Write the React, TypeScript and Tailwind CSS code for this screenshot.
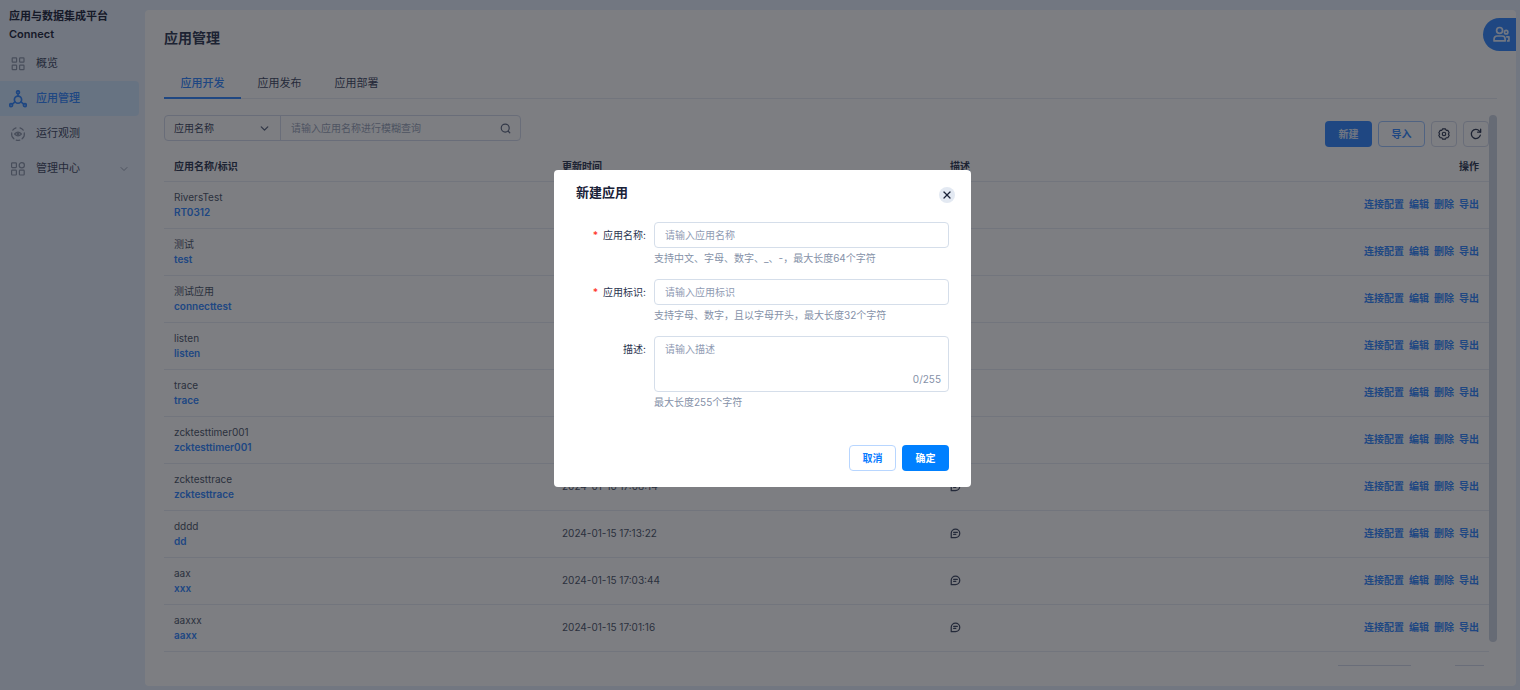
import { useState } from 'react'
import type { ReactNode } from 'react'
import { ChevronDown, X } from 'lucide-react'

interface AppRow {
  name: string
  code: string
  updatedAt?: string
}

const rows: AppRow[] = [
  { name: 'RiversTest', code: 'RT0312' },
  { name: '测试', code: 'test' },
  { name: '测试应用', code: 'connecttest' },
  { name: 'listen', code: 'listen' },
  { name: 'trace', code: 'trace' },
  { name: 'zcktesttimer001', code: 'zcktesttimer001' },
  { name: 'zcktesttrace', code: 'zcktesttrace', updatedAt: '2024-01-16 17:08:14' },
  { name: 'dddd', code: 'dd', updatedAt: '2024-01-15 17:13:22' },
  { name: 'aax', code: 'xxx', updatedAt: '2024-01-15 17:03:44' },
  { name: 'aaxxx', code: 'aaxx', updatedAt: '2024-01-15 17:01:16' },
]

const tabs = ['应用开发', '应用发布', '应用部署']
const rowActions = ['连接配置', '编辑', '删除', '导出']

function Svg({ size, children, strokeWidth = 1.2 }: { size: number; children: ReactNode; strokeWidth?: number }) {
  return (
    <svg
      width={size}
      height={size}
      viewBox="0 0 16 16"
      fill="none"
      stroke="currentColor"
      strokeWidth={strokeWidth}
      strokeLinecap="round"
      strokeLinejoin="round"
      className="shrink-0"
      aria-hidden="true"
    >
      {children}
    </svg>
  )
}

function OverviewIcon() {
  return (
    <Svg size={16}>
      <rect x="2.2" y="1.8" width="4.4" height="4.4" rx="0.6" />
      <rect x="9.6" y="1.8" width="4.4" height="4.4" rx="0.6" />
      <rect x="2.2" y="9.2" width="4.4" height="4.4" rx="0.6" />
      <rect x="9.6" y="9.2" width="4.4" height="4.4" rx="0.6" />
    </Svg>
  )
}

function AppsIcon() {
  return (
    <Svg size={18} strokeWidth={1.5}>
      <circle cx="8" cy="8.6" r="3.2" />
      <circle cx="8" cy="2" r="1.3" />
      <circle cx="1.9" cy="13.4" r="1.3" />
      <circle cx="14.1" cy="13.4" r="1.3" />
      <path d="M8 3.3v2.1M5.4 10.6l-2.5 2M10.6 10.6l2.5 2" />
    </Svg>
  )
}

function MonitorIcon() {
  return (
    <Svg size={16}>
      <path d="M6 1.9A6.4 6.4 0 0 0 2.8 4.2M1.7 6.8a6.4 6.4 0 0 0 2.2 6M10 1.9a6.4 6.4 0 0 1 3.2 2.3M14.3 6.8a6.4 6.4 0 0 1-2.2 6M6.2 14.2q1.8.4 3.6 0" />
      <path d="M4.6 8Q8 4.4 11.4 8 8 11.6 4.6 8z" />
      <circle cx="8" cy="8" r="0.8" />
    </Svg>
  )
}

function AdminIcon() {
  return (
    <Svg size={16}>
      <rect x="1.6" y="1.8" width="4.8" height="4.8" rx="0.8" />
      <circle cx="11.8" cy="4.2" r="2.6" />
      <rect x="1.6" y="9.2" width="4.8" height="4.8" rx="0.8" />
      <rect x="9.4" y="9.2" width="4.8" height="4.8" rx="0.8" />
    </Svg>
  )
}

function SearchIcon() {
  return (
    <Svg size={11} strokeWidth={1.7}>
      <circle cx="7.6" cy="7.4" r="5.8" />
      <path d="M12 12l2.2 2.2" />
    </Svg>
  )
}

function SettingIcon() {
  return (
    <Svg size={12} strokeWidth={1.5}>
      <path d="M6.2 1.2h3.6l1.1 1.9 2.2.1 1.8 3.1L13.8 8l1.1 1.8-1.8 3.1-2.2.1-1.1 1.9H6.2l-1.1-1.9-2.2-.1-1.8-3.1L2.2 8 1.1 6.3l1.8-3.1 2.2-.1z" />
      <circle cx="8" cy="8" r="2.3" />
    </Svg>
  )
}

function RefreshIcon() {
  return (
    <Svg size={12} strokeWidth={1.7}>
      <path d="M13.8 9.6A6.1 6.1 0 1 1 12.4 3.8L14 5.4" />
      <path d="M14.2 1.6v4h-4" />
    </Svg>
  )
}

function NoteIcon() {
  return (
    <Svg size={11} strokeWidth={1.8}>
      <path d="M1.8 14V7.8a6.2 6.2 0 1 1 6.2 6.2z" />
      <path d="M5.4 6.4h5.2M5.4 9.4h3" />
    </Svg>
  )
}

function UsersIcon() {
  return (
    <Svg size={17} strokeWidth={1.6}>
      <circle cx="6.2" cy="4.2" r="2.8" />
      <path d="M1 14v-1.8a2.8 2.8 0 0 1 2.8-2.8h4.8a2.8 2.8 0 0 1 2.8 2.8V14z" />
      <circle cx="12.4" cy="5.8" r="1.6" />
      <path d="M13 10.2h2V14h-1.2" />
    </Svg>
  )
}

const menu = [
  { label: '概览', icon: <OverviewIcon /> },
  { label: '应用管理', icon: <AppsIcon />, active: true },
  { label: '运行观测', icon: <MonitorIcon /> },
  { label: '管理中心', icon: <AdminIcon />, expandable: true },
]

function Sidebar() {
  return (
    <aside className="w-[145px] shrink-0 pt-[7px]">
      <div className="mb-[3px] pl-[9px] text-[11px] leading-[18px] font-semibold text-[#1a2238]">
        <div>应用与数据集成平台</div>
        <div>Connect</div>
      </div>
      <nav className="mr-[6px] text-[11px]">
        {menu.map(item => (
          <a
            key={item.label}
            href="#"
            className={`flex h-[35px] items-center rounded-r-sm pr-[9px] ${
              item.active ? 'bg-[#cfe6ff] font-medium text-[#2f86ff]' : 'text-[#3b4560]'
            }`}
          >
            <span className={`flex w-9 items-center justify-center ${item.active ? '' : 'text-[#8a94a8]'}`}>{item.icon}</span>
            <span className="flex-1">{item.label}</span>
            {item.expandable && <ChevronDown size={12} strokeWidth={1.5} className="text-[#7c879c]" />}
          </a>
        ))}
      </nav>
    </aside>
  )
}

function Toolbar() {
  return (
    <div className="flex items-start justify-between">
      <div className="flex h-[26px] w-[357px] items-center rounded-sm border border-[#d3daea] text-[10px]">
        <div className="relative h-full w-[116px] border-r border-[#d3daea]">
          <select aria-label="查询字段" className="h-full w-full appearance-none bg-transparent pl-[9px] text-[#3b4560]">
            <option>应用名称</option>
          </select>
          <ChevronDown size={13} strokeWidth={2.5} className="pointer-events-none absolute top-[6px] right-[9px] text-[#5a657e]" />
        </div>
        <input
          aria-label="应用名称查询"
          placeholder="请输入应用名称进行模糊查询"
          className="h-full min-w-0 flex-1 bg-transparent pl-[10px] placeholder:text-[#98a3b8]"
        />
        <button aria-label="查询" className="pr-[9px] text-[#5a657e]">
          <SearchIcon />
        </button>
      </div>
      <div className="mt-[6px] flex gap-[6px] text-[10px] font-semibold">
        <button className="h-[26px] w-[47px] rounded-sm bg-[#2f86ff] text-[#e4eeff]">新建</button>
        <button className="h-[26px] w-[47px] rounded-sm border border-[#9cc4ff] text-[#2f86ff]">导入</button>
        <button aria-label="设置" className="flex h-[26px] w-[26px] items-center justify-center rounded-sm border border-[#d3daea] text-[#2b3550]">
          <SettingIcon />
        </button>
        <button aria-label="刷新" className="flex h-[26px] w-[26px] items-center justify-center rounded-sm border border-[#d3daea] text-[#2b3550]">
          <RefreshIcon />
        </button>
      </div>
    </div>
  )
}

function AppTable() {
  return (
    <table className="mt-1 w-full table-fixed border-collapse text-[10px] leading-[15px]">
      <thead>
        <tr className="h-[30px] border-b border-[#e6eaf3] text-left text-[#2b3550]">
          <th className="px-[10px] pt-[2px] font-semibold">应用名称/标识</th>
          <th className="px-[10px] pt-[2px] font-semibold">更新时间</th>
          <th className="px-[10px] pt-[2px] font-semibold">描述</th>
          <th className="w-[161px] px-[10px] pt-[2px] text-right font-semibold">操作</th>
        </tr>
      </thead>
      <tbody>
        {rows.map(row => (
          <tr key={row.name} className="h-[47px] border-b border-[#e6eaf3] text-[#4a5468]">
            <td className="px-[10px]">
              <div>{row.name}</div>
              <a href="#" className="block font-semibold text-[#2f86ff]">
                {row.code}
              </a>
            </td>
            <td className="px-[10px]">{row.updatedAt}</td>
            <td className="px-[10px] text-[#3b4560]">
              <NoteIcon />
            </td>
            <td className="px-[10px]">
              <div className="flex justify-end gap-[5px] font-semibold whitespace-nowrap text-[#2f86ff]">
                {rowActions.map(action => (
                  <a key={action} href="#">
                    {action}
                  </a>
                ))}
              </div>
            </td>
          </tr>
        ))}
      </tbody>
    </table>
  )
}

interface FieldProps {
  id: string
  label: string
  help: string
  required?: boolean
  children: ReactNode
}

function Field({ id, label, help, required, children }: FieldProps) {
  return (
    <div className="flex">
      <label htmlFor={id} className="flex h-[26px] w-[78px] shrink-0 items-center justify-end pr-[8px] text-[#2b3550]">
        {required && <span className="mr-[5px] font-semibold text-[#ff3b30]">*</span>}
        {label}
        <span>:</span>
      </label>
      <div className="flex-1">
        {children}
        <p className="leading-5 text-[#8591a8]">{help}</p>
      </div>
    </div>
  )
}

function CreateDialog({ onClose }: { onClose: () => void }) {
  const [description, setDescription] = useState('')
  const control = 'block w-full rounded-sm border border-[#d5deea] px-[10px] placeholder:text-[#8f9bb3]'

  return (
    <div className="fixed inset-0 flex items-start justify-center bg-[#12141c]/55 pt-[170px] pl-[5px]">
      <div role="dialog" aria-modal="true" aria-labelledby="dialog-title" className="w-[417px] rounded-sm bg-white px-[22px] pb-4 text-[10px]">
        <div className="flex items-start justify-between pt-3">
          <h2 id="dialog-title" className="text-[13px] leading-5 font-semibold text-[#1a2238]">
            新建应用
          </h2>
          <button
            aria-label="关闭"
            onClick={onClose}
            className="mt-[5px] -mr-[6px] flex size-4 items-center justify-center rounded-full bg-[#e3e9f2] text-[#1a2238]"
          >
            <X size={12} strokeWidth={2.5} />
          </button>
        </div>
        <form className="mt-[19px]" onSubmit={e => e.preventDefault()}>
          <div className="flex flex-col gap-[11px]">
            <Field id="app-name" label="应用名称" help="支持中文、字母、数字、_、-，最大长度64个字符" required>
              <input id="app-name" placeholder="请输入应用名称" className={`${control} h-[26px]`} />
            </Field>
            <Field id="app-code" label="应用标识" help="支持字母、数字，且以字母开头，最大长度32个字符" required>
              <input id="app-code" placeholder="请输入应用标识" className={`${control} h-[26px]`} />
            </Field>
            <Field id="app-desc" label="描述" help="最大长度255个字符">
              <div className="relative">
                <textarea
                  id="app-desc"
                  placeholder="请输入描述"
                  maxLength={255}
                  value={description}
                  onChange={e => setDescription(e.target.value)}
                  className={`${control} h-14 resize-none py-1 leading-4`}
                />
                <span className="absolute right-2 bottom-[5px] leading-4 text-[#8591a8]">{description.length}/255</span>
              </div>
            </Field>
          </div>
          <div className="mt-[33px] flex justify-end gap-[6px] font-semibold">
            <button type="button" onClick={onClose} className="h-[26px] w-[47px] rounded-sm border border-[#b8d6ff] text-[#0a7cff]">
              取消
            </button>
            <button type="submit" className="h-[26px] w-[47px] rounded-sm bg-[#0080ff] text-white">
              确定
            </button>
          </div>
        </form>
      </div>
    </div>
  )
}

export default function App() {
  const [activeTab, setActiveTab] = useState(tabs[0])
  const [dialogOpen, setDialogOpen] = useState(true)

  return (
    <div className="flex min-h-screen bg-[#e6effc] font-['Inter','Noto_Sans_CJK_SC',sans-serif]">
      <Sidebar />
      <main className="mt-[10px] mr-1 mb-1 min-w-0 flex-1 rounded-sm bg-white px-[19px]">
        <h1 className="pt-[18px] text-[14px] leading-5 font-semibold text-[#2b3550]">应用管理</h1>
        <div role="tablist" className="mt-5 flex border-b border-[#e6eaf3] text-[11px]">
          {tabs.map(tab => (
            <button
              key={tab}
              role="tab"
              aria-selected={tab === activeTab}
              onClick={() => setActiveTab(tab)}
              className={`-mb-px h-[31px] w-[77px] border-b-2 pt-[2px] ${
                tab === activeTab ? 'border-[#2f86ff] font-medium text-[#2f86ff]' : 'border-transparent text-[#3b4560]'
              }`}
            >
              {tab}
            </button>
          ))}
        </div>
        <div className="mt-4 flex">
          <div className="min-w-0 flex-1">
            <Toolbar />
            <AppTable />
            <div className="mt-[13px] flex justify-end gap-11 pr-[5px]">
              <div className="w-[73px] border-t border-[#d3daea]" />
              <div className="w-[29px] border-t border-[#d3daea]" />
            </div>
          </div>
          <div className="mb-6 w-2 rounded-sm bg-[#ccd4e2]" />
        </div>
      </main>
      <button
        aria-label="用户"
        className="fixed top-[18px] right-1 flex h-[33px] w-[33px] items-center justify-center rounded-l-full bg-[#2f86ff] pl-1 text-[#e4eeff]"
      >
        <UsersIcon />
      </button>
      {dialogOpen && <CreateDialog onClose={() => setDialogOpen(false)} />}
    </div>
  )
}
